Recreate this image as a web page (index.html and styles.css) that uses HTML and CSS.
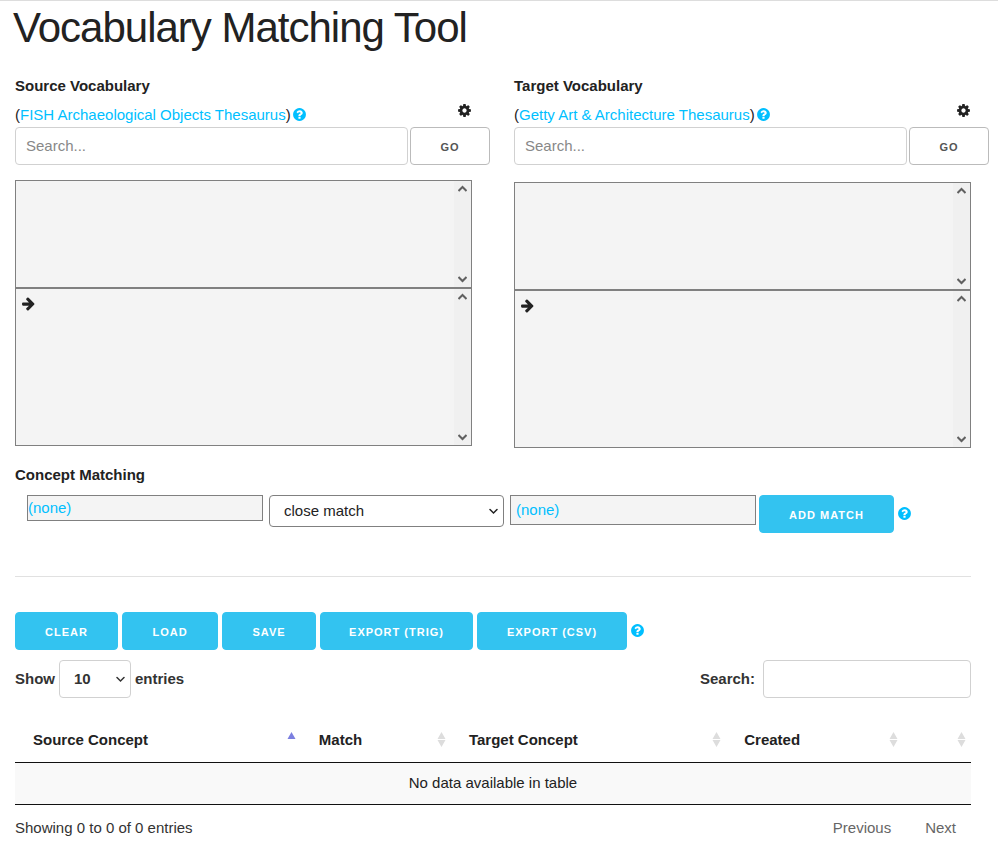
FILE: index.html
```
<!DOCTYPE html>
<html lang="en">
<head>
<meta charset="utf-8">
<meta name="viewport" content="width=device-width, initial-scale=1">
<title>Vocabulary Matching Tool</title>
<link rel="stylesheet" href="styles.css">
</head>
<body>
<svg class="sprite" aria-hidden="true">
  <symbol id="help" viewBox="0 0 1792 1792"><path d="M1024 1376v-192q0-14-9-23t-23-9h-192q-14 0-23 9t-9 23v192q0 14 9 23t23 9h192q14 0 23-9t9-23zM1280 704q0-88-55.5-163t-138.5-116-170-41q-243 0-371 213-15 24 8 42l132 100q7 6 19 6 16 0 25-12 53-68 86-92 34-24 86-24 48 0 85.500 26t37.500 59q0 38-20 61t-68 45q-63 28-115.500 86.500t-52.500 125.500v36q0 14 9 23t23 9h192q14 0 23-9t9-23q0-19 21.500-49.500t54.500-49.500q32-18 49-28.500t46-35 44.500-48 28-60.500 12.500-81zM1664 896q0 209-103 385.500t-279.500 279.500-385.500 103-385.500-103-279.500-279.500-103-385.500 103-385.500 279.500-279.500 385.500-103 385.500 103 279.500 279.500 103 385.500z"/></symbol>
  <symbol id="cog" viewBox="0 0 1792 1792"><path d="M1152 896q0-106-75-181t-181-75-181 75-75 181 75 181 181 75 181-75 75-181zM1664 787v222q0 12-8 23t-20 13l-185 28q-19 54-39 91 35 50 107 138 10 12 10 25t-9 23q-27 37-99 108t-94 71q-12 0-26-9l-138-108q-44 23-91 38-16 136-29 186-7 28-36 28h-222q-14 0-24.500-8.500t-11.500-21.500l-28-184q-49-16-90-37l-141 107q-10 9-25 9-14 0-25-11-126-114-165-168-7-10-7-23 0-12 8-23 15-21 51-66.500t54-70.500q-27-50-41-99l-183-27q-13-2-21-12.500t-8-23.500v-222q0-12 8-23t19-13l186-28q14-46 39-92-40-57-107-138-10-12-10-24 0-10 9-23 26-36 98.500-107.500t94.500-71.500q13 0 26 10l138 107q44-23 91-38 16-136 29-186 7-28 36-28h222q14 0 24.500 8.500t11.500 21.500l28 184q49 16 90 37l142-107q9-9 24-9 13 0 25 10 129 119 165 170 7 8 7 22 0 12-8 23-15 21-51 66.500t-54 70.500q26 50 41 98l183 28q13 2 21 12.500t8 23.500z"/></symbol>
  <symbol id="arrow" viewBox="0 0 1792 1792"><path d="M1600 960q0 54-37 91l-651 651q-39 37-91 37-51 0-90-37l-75-75q-38-38-38-91t38-91l293-293h-704q-52 0-84.500-37.500t-32.500-90.500v-128q0-53 32.500-90.500t84.500-37.500h704l-293-294q-38-36-38-90t38-90l75-75q38-38 90-38 53 0 91 38l651 651q37 35 37 90z"/></symbol>
  <symbol id="up" viewBox="0 0 9 7"><path d="M.5 6 4.500 2 8.500 6" fill="none" stroke="currentColor" stroke-width="2"/></symbol>
  <symbol id="down" viewBox="0 0 9 7"><path d="M.5 1 4.500 5 8.500 1" fill="none" stroke="currentColor" stroke-width="2"/></symbol>
  <symbol id="chevron" viewBox="0 0 9 7"><path d="M1 1.500 4.500 5 8 1.500" fill="none" stroke="currentColor" stroke-width="1.500" stroke-linecap="round"/></symbol>
  <symbol id="sort" viewBox="0 0 9 16"><path d="M4.500 0 8.500 7h-8zM.500 8h8l-4 7z"/></symbol>
  <symbol id="sort-asc" viewBox="0 0 9 16"><path d="M4.500 0 8.500 7h-8z"/></symbol>
</svg>
<main class="page">
  <h1>Vocabulary Matching Tool</h1>

  <div class="columns">
    <section>
      <h2>Source Vocabulary</h2>
      <div class="vocab">
        <span>(<a href="#">FISH Archaeological Objects Thesaurus</a>)</span>
        <a class="help" href="#" aria-label="Help"><svg class="icon"><use href="#help"/></svg></a>
        <button class="settings" type="button" aria-label="Settings"><svg class="icon"><use href="#cog"/></svg></button>
      </div>
      <form class="search">
        <input class="field" type="text" placeholder="Search..." aria-label="Search source vocabulary">
        <button class="btn go" type="button">Go</button>
      </form>
      <div class="panel results">
        <div class="content"></div>
        <div class="track"><svg><use href="#up"/></svg><svg><use href="#down"/></svg></div>
      </div>
      <div class="panel details">
        <div class="content"><svg class="icon"><use href="#arrow"/></svg></div>
        <div class="track"><svg><use href="#up"/></svg><svg><use href="#down"/></svg></div>
      </div>
    </section>
    <section class="target">
      <h2>Target Vocabulary</h2>
      <div class="vocab">
        <span>(<a href="#">Getty Art &amp; Architecture Thesaurus</a>)</span>
        <a class="help" href="#" aria-label="Help"><svg class="icon"><use href="#help"/></svg></a>
        <button class="settings" type="button" aria-label="Settings"><svg class="icon"><use href="#cog"/></svg></button>
      </div>
      <form class="search">
        <input class="field" type="text" placeholder="Search..." aria-label="Search target vocabulary">
        <button class="btn go" type="button">Go</button>
      </form>
      <div class="panel results">
        <div class="content"></div>
        <div class="track"><svg><use href="#up"/></svg><svg><use href="#down"/></svg></div>
      </div>
      <div class="panel details">
        <div class="content"><svg class="icon"><use href="#arrow"/></svg></div>
        <div class="track"><svg><use href="#up"/></svg><svg><use href="#down"/></svg></div>
      </div>
    </section>
  </div>

  <h2>Concept Matching</h2>
  <div class="matching">
    <div class="concept concept-source"><a href="#">(none)</a></div>
    <div class="select match-type">
      <select aria-label="Match type"><option>close match</option></select>
      <svg><use href="#chevron"/></svg>
    </div>
    <div class="concept concept-target"><a href="#">(none)</a></div>
    <button class="btn primary add" type="button">Add match</button>
    <a class="help" href="#" aria-label="Help"><svg class="icon"><use href="#help"/></svg></a>
  </div>

  <hr>

  <div class="actions">
    <button class="btn primary clear" type="button">Clear</button>
    <button class="btn primary load" type="button">Load</button>
    <button class="btn primary save" type="button">Save</button>
    <button class="btn primary export-trig" type="button">Export (TriG)</button>
    <button class="btn primary export-csv" type="button">Export (CSV)</button>
    <a class="help" href="#" aria-label="Help"><svg class="icon"><use href="#help"/></svg></a>
  </div>

  <div class="table-tools">
    <div class="length">
      <label for="length">Show</label>
      <div class="select">
        <select id="length"><option>10</option></select>
        <svg><use href="#chevron"/></svg>
      </div>
      <label for="length">entries</label>
    </div>
    <div class="filter">
      <label for="filter">Search:</label>
      <input class="field" id="filter" type="search">
    </div>
  </div>

  <table>
    <colgroup><col class="c-source"><col class="c-match"><col class="c-target"><col class="c-created"><col></colgroup>
    <thead>
      <tr>
        <th scope="col"><div class="head">Source Concept<svg class="sorted"><use href="#sort-asc"/></svg></div></th>
        <th scope="col"><div class="head">Match<svg><use href="#sort"/></svg></div></th>
        <th scope="col"><div class="head">Target Concept<svg><use href="#sort"/></svg></div></th>
        <th scope="col"><div class="head">Created<svg><use href="#sort"/></svg></div></th>
        <th scope="col" aria-label="Actions"><div class="head"><svg><use href="#sort"/></svg></div></th>
      </tr>
    </thead>
    <tbody>
      <tr><td colspan="5">No data available in table</td></tr>
    </tbody>
  </table>

  <div class="table-footer">
    <div>Showing 0 to 0 of 0 entries</div>
    <nav class="paging" aria-label="Table pages"><a href="#">Previous</a><a href="#">Next</a></nav>
  </div>
</main>
</body>
</html>
```
FILE: styles.css
```
* { box-sizing: border-box; }

body {
  margin: 0;
  border-top: 1px solid #ddd;
  background: #fff;
  color: #222;
  font: 15px/24px "Liberation Sans", Arial, sans-serif;
}

.sprite { display: none; }
.page { padding: 0 27px 0 15px; }
a { color: #00bfff; text-decoration: none; }
svg { display: block; fill: currentColor; }
.icon { width: 15px; height: 15px; }

h1 {
  margin: 0 0 19px -2px;
  font-size: 42px;
  font-weight: 400;
  line-height: 54px;
  letter-spacing: -1px;
}

h2 { margin: 0; font-size: 15px; line-height: 24px; }

.columns {
  display: grid;
  grid-template-columns: 1fr 1fr;
  gap: 42px;
  margin-bottom: 15px;
}

.vocab { display: flex; height: 29px; padding-top: 5px; }
.vocab .help { margin: 4px 0 0 1px; }

.settings {
  margin: 0 0 0 auto;
  height: 15px;
  padding: 0;
  border: 0;
  background: none;
  color: #222;
}

.search { display: flex; gap: 2px; margin: 0 -18px 15px 0; }
.search .field { flex: 1; }
.target .search { margin-bottom: 17px; }

.field {
  min-width: 0;
  height: 38px;
  padding: 5px 10px 7px;
  border: 1px solid #d1d1d1;
  border-radius: 4px;
  background: #fff;
  color: #222;
  font: inherit;
}
.field::placeholder { color: #888; }

.btn {
  height: 38px;
  padding: 0;
  border: 1px solid #bbb;
  border-radius: 4px;
  background: #fff;
  color: #555;
  font: 600 11px/38px "Liberation Sans", Arial, sans-serif;
  letter-spacing: 1px;
  text-transform: uppercase;
  white-space: nowrap;
}
.primary { border-color: #33c3f0; background: #33c3f0; color: #fff; }
.go { width: 80px; }
.add { width: 135px; }
.clear { width: 103px; }
.load { width: 96px; }
.save { width: 94px; }
.export-trig { width: 153px; }
.export-csv { width: 150px; }

.panel {
  display: flex;
  border: 1px solid #808080;
  background: #f4f4f4;
}
.results { height: 108px; }
.details { height: 158px; }
.content { flex: 1; padding: 7px 5px; }
.track {
  display: flex;
  flex-direction: column;
  justify-content: space-between;
  align-items: center;
  width: 17px;
  padding: 4px 0;
  background: #f0f0f0;
  color: #606060;
}
.track svg { width: 9px; height: 7px; }

.matching {
  display: flex;
  align-items: flex-start;
  margin: 8px 0 43px 12px;
}
.concept { border: 1px solid #808080; background: #f4f4f4; }
.concept-source { width: 236px; }
.concept-target { width: 246px; margin-right: 3px; padding: 2px 5px; }
.match-type { width: 235px; margin: 0 6px; }
.matching .help, .actions .help { margin: 11px 0 0 3px; }

.select { position: relative; }
.select select {
  width: 100%;
  height: 38px;
  padding: 0 14px;
  border: 1px solid #d1d1d1;
  border-radius: 4px;
  background: #fff;
  color: inherit;
  font: inherit;
  appearance: none;
}
.select svg {
  position: absolute;
  top: 50%;
  right: 6px;
  width: 9px;
  height: 7px;
  margin-top: -3px;
  pointer-events: none;
}
.match-type select { height: 32px; border-color: #808080; }

hr { margin: 0 0 35px; border: 0; border-top: 1px solid #e1e1e1; }

.actions { display: flex; gap: 4px; margin-bottom: 10px; }
.actions .help { margin-left: -1px; }

.table-tools {
  display: flex;
  justify-content: space-between;
  margin-bottom: 20px;
  color: #333;
  font-weight: 700;
}
.length, .filter { display: flex; align-items: center; }
.length { gap: 4px; }
.length .select { width: 72px; }
.filter { gap: 8px; }
.filter .field { width: 208px; }

table { width: 100%; border-collapse: collapse; table-layout: fixed; }
.c-source { width: 29.9%; }
.c-match { width: 15.7%; }
.c-target { width: 28.8%; }
.c-created { width: 18.5%; }
th { padding: 10px 5px 10px 18px; border-bottom: 1px solid #111; text-align: left; }
td { padding: 8px 10px 9px; border-bottom: 1px solid #111; background: #f9f9f9; text-align: center; }
.head { display: flex; align-items: center; justify-content: space-between; height: 24px; white-space: nowrap; }
.head svg { width: 9px; height: 16px; margin-left: auto; color: #ddd; }
.head .sorted { color: #7b7fe0; }

.table-footer { display: flex; justify-content: space-between; padding-top: 11px; color: #333; }
.paging { display: flex; gap: 34px; padding-right: 15px; }
.paging a { color: #666; }
```
